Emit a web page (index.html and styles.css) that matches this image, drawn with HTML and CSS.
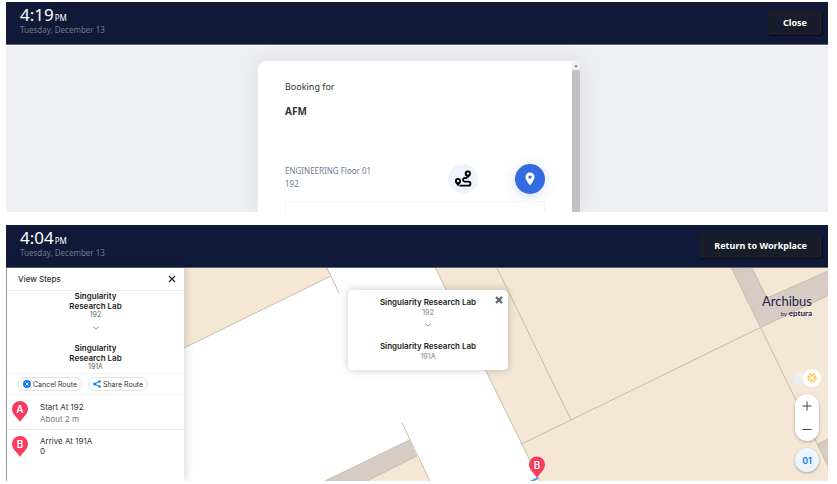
FILE: index.html
```html
<!DOCTYPE html>
<html lang="en">
<head>
<meta charset="utf-8">
<title>Workplace kiosk</title>
<link rel="stylesheet" href="styles.css">
</head>
<body>
<section class="screen">
  <header class="topbar">
    <div class="clock">
      <div class="time">4:19<span class="meridiem">PM</span></div>
      <div class="date">Tuesday, December 13</div>
    </div>
    <button class="action" type="button">Close</button>
  </header>
  <main class="stage">
    <div class="booking">
      <div class="booking-body">
        <p class="label">Booking for</p>
        <h1 class="title">AFM</h1>
        <div class="place">
          <div class="place-text">ENGINEERING Floor 01<br>192</div>
          <button class="round route" type="button" aria-label="Route">
            <svg width="18" height="18" viewBox="0 0 18 18" fill="none" stroke="#000">
              <circle cx="13.8" cy="3.5" r="2.1" stroke-width="2"/>
              <path d="M11 4.800 13.800 8.400 16.600 4.800Z" fill="#000" stroke="none"/>
              <circle cx="13.800" cy="3.500" r="1" fill="#fff" stroke="none"/>
              <circle cx="4" cy="11" r="2.1" stroke-width="2"/>
              <path d="M1.200 12.300 4 16.500 6.800 12.300Z" fill="#000" stroke="none"/>
              <circle cx="4" cy="11" r="1" fill="#fff" stroke="none"/>
              <path d="M13 8H10.500a1.900 1.900 0 0 0 0 3.700H14.500a1.900 1.900 0 0 1 0 3.900H5.500" stroke-width="1.800"/>
            </svg>
          </button>
          <button class="round locate" type="button" aria-label="Locate">
            <svg width="10" height="14" viewBox="0 0 10 14"><path fill="#fff" fill-rule="evenodd" d="M5 .5A4.5 4.5 0 0 0 .5 5C.5 8.3 5 13.3 5 13.3S9.500 8.300 9.500 5A4.500 4.500 0 0 0 5 .5Zm0 2.900a1.700 1.700 0 1 1 0 3.400 1.700 1.700 0 0 1 0-3.400Z"/></svg>
          </button>
        </div>
        <div class="field"></div>
      </div>
      <div class="scrollbar">
        <svg class="scroll-up" viewBox="0 0 8 9"><path d="M2 6 4 3.500 6 6Z" fill="#888"/></svg>
        <div class="scroll-thumb"></div>
      </div>
    </div>
  </main>
</section>

<section class="screen">
  <header class="topbar">
    <div class="clock">
      <div class="time">4:04<span class="meridiem">PM</span></div>
      <div class="date">Tuesday, December 13</div>
    </div>
    <button class="action" type="button">Return to Workplace</button>
  </header>
  <main class="map">
    <svg class="floor" viewBox="6 268 822 213" preserveAspectRatio="xMinYMin slice">
      <g fill="#f4e7d6">
        <path d="M6 268H327L331 276 184 348 6 435Z"/>
        <path d="M435.500 268H828V481H540Z"/>
        <path d="M367 481 417 456 429.500 481Z"/>
      </g>
      <g fill="#d6ccc4">
        <path d="M731.500 268H752L767 298 828 271V295.500L760.500 327.500Z"/>
        <path d="M325 481 409.500 440 417 456 367 481Z"/>
        <path d="M817 444.500 828 439V466Z"/>
      </g>
      <g fill="none" stroke="#cbbba6">
        <path d="M327 268 339.500 294M184 348 331 276"/>
        <path d="M435.500 268 540 481M497 268 571 420M521.700 444 760.500 327.500 828 295.500"/>
        <path d="M731.500 268 828 466M752 268 767 298 828 271M817 444.500 828 439"/>
        <path d="M402 423 430 481M325 481 409.500 440M367 481 417 456"/>
      </g>
      <path d="M538 478 530 482" stroke="#3aa5ee" stroke-width="2"/>
      <path d="M537 478C535 474 529 470 529 464.500a8 8 0 0 1 16 0C545 470 539 474 537 478Z" fill="#fb3a5d"/>
      <text class="pin-letter" x="537" y="469" text-anchor="middle">B</text>
    </svg>

    <aside class="steps">
      <div class="steps-head">
        <h2>View Steps</h2>
        <button class="bare" type="button" aria-label="Close steps">
          <svg width="8" height="8" viewBox="0 0 8 8"><path d="M1 1 7 7M7 1 1 7" stroke="#222" stroke-width="1.200"/></svg>
        </button>
      </div>
      <div class="endpoints narrow">
        <strong>Singularity<br>Research Lab</strong>
        <span>192</span>
        <svg width="8" height="6" viewBox="0 0 8 6"><path d="M1 1.500 4 4 7 1.500" fill="none" stroke="#999"/></svg>
        <strong>Singularity<br>Research Lab</strong>
        <span>191A</span>
      </div>
      <div class="chips">
        <button class="chip" type="button">
          <svg width="8" height="8" viewBox="0 0 8 8"><circle cx="4" cy="4" r="4" fill="#0c7ff2"/><path d="M2.500 2.500 5.500 5.500M5.500 2.500 2.500 5.500" stroke="#fff"/></svg>
          Cancel Route
        </button>
        <button class="chip" type="button">
          <svg width="8" height="8" viewBox="0 0 8 8"><path d="M6.500 1.500 1.700 4 6.500 6.500" fill="none" stroke="#0c7ff2"/><g fill="#0c7ff2"><circle cx="6.500" cy="1.500" r="1.300"/><circle cx="1.700" cy="4" r="1.600"/><circle cx="6.500" cy="6.500" r="1.300"/></g></svg>
          Share Route
        </button>
      </div>
      <div class="step">
        <svg width="16" height="21" viewBox="0 0 16 21"><path d="M8 21C6 17 0 13.500 0 8a8 8 0 0 1 16 0C16 13.500 10 17 8 21Z" fill="#fb3a5d"/><text class="pin-letter" x="8" y="12" text-anchor="middle">A</text></svg>
        <div><p>Start At 192</p><p class="muted">About 2 m</p></div>
      </div>
      <div class="step last">
        <svg width="16" height="21" viewBox="0 0 16 21"><path d="M8 21C6 17 0 13.500 0 8a8 8 0 0 1 16 0C16 13.500 10 17 8 21Z" fill="#fb3a5d"/><text class="pin-letter" x="8" y="12" text-anchor="middle">B</text></svg>
        <div><p>Arrive At 191A</p><p>0</p></div>
      </div>
    </aside>

    <div class="popup endpoints">
      <button class="bare popup-close" type="button" aria-label="Close route">
        <svg width="8" height="8" viewBox="0 0 8 8"><path d="M1 1 7 7M7 1 1 7" stroke="#666" stroke-width="2.200"/></svg>
      </button>
      <strong>Singularity Research Lab</strong>
      <span>192</span>
      <svg width="8" height="6" viewBox="0 0 8 6"><path d="M1 1.500 4 4 7 1.500" fill="none" stroke="#999"/></svg>
      <strong>Singularity Research Lab</strong>
      <span>191A</span>
    </div>

    <div class="logo">
      <div class="logo-name">Archibus</div>
      <div class="logo-by"><small>by</small> eptura</div>
    </div>

    <div class="controls">
      <button class="theme" type="button" aria-label="Light mode">
        <span class="track"></span>
        <span class="knob"><svg width="10" height="10" viewBox="0 0 10 10" fill="none" stroke="#f9c646"><circle cx="5" cy="5" r="2.500"/><circle cx="5" cy="5" r="4" stroke-width="1.600" stroke-dasharray="2.100 1.040"/></svg></span>
      </button>
      <div class="zoom">
        <button class="bare" type="button" aria-label="Zoom in"><svg width="10" height="10" viewBox="0 0 10 10"><path d="M5 .5V9.500M.5 5H9.500" stroke="#444"/></svg></button>
        <button class="bare" type="button" aria-label="Zoom out"><svg width="10" height="10" viewBox="0 0 10 10"><path d="M.5 5.500H9.500" stroke="#444"/></svg></button>
      </div>
      <button class="level" type="button">01</button>
    </div>
  </main>
</section>
</body>
</html>
```
FILE: styles.css
```css
* { box-sizing: border-box; }

body {
  margin: 0;
  padding: 2px 9px 3px 6px;
  height: 100vh;
  display: grid;
  grid-template-rows: 210fr 256fr;
  gap: 13px;
  background: #fff;
  font-family: "Noto Sans", sans-serif;
}

h1, h2, p { margin: 0; }
button { font: inherit; border: 0; padding: 0; cursor: pointer; }
svg { display: block; flex: none; }
.bare { background: none; }

.screen { display: flex; flex-direction: column; min-height: 0; overflow: hidden; }

/* Top bar */
.topbar {
  display: flex;
  justify-content: space-between;
  align-items: flex-start;
  flex: none;
  height: 43px;
  padding: 0 6px 0 14px;
  background: #101a38;
  border-bottom: 1px solid #5c6075;
}
.clock { padding-top: 2px; }
.time { color: #fff; font-size: 17px; line-height: 22px; }
.meridiem { font-size: 8px; line-height: 8px; margin-left: 1px; }
.date { color: #70758e; font-size: 8px; line-height: 8px; }
.action {
  margin-top: 8px;
  height: 25px;
  padding: 0 15px;
  border-radius: 3px;
  background: #191d2b;
  color: #fff;
  font-size: 9px;
  font-weight: 700;
  box-shadow: 1px 1px 1px #080b16;
}

/* Booking */
.stage {
  flex: 1;
  min-height: 0;
  display: flex;
  justify-content: center;
  padding: 15px 0 0 4px;
  border-top: 1px solid #fff;
  background: #eeeff3;
}
.booking {
  display: flex;
  width: 322px;
  background: #fff;
  border-radius: 8px 0 0 0;
  box-shadow: 0 0 20px rgba(40, 40, 70, .08);
}
.booking-body { flex: 1; display: flex; flex-direction: column; padding: 18px 27px 0; }
.label { color: #333; font-size: 9px; line-height: 16px; }
.title { margin-top: 8px; color: #333; font-size: 10px; line-height: 16px; }
.place { display: flex; align-items: flex-start; margin-top: 45px; }
.place-text { flex: 1; color: #6d7b90; font-size: 8px; line-height: 13px; }
.round { display: grid; place-items: center; width: 30px; height: 30px; border-radius: 50%; }
.route { background: #eff3fe; }
.locate { margin-left: 37px; background: #356be0; box-shadow: 0 2px 12px rgba(53, 107, 224, .25); }
.field { flex: 1; margin-top: 7px; border: 1px solid #f4f4f6; border-bottom: 0; }
.scrollbar { display: flex; flex-direction: column; width: 8px; background: #f1f1f1; }
.scroll-up { width: 8px; height: 9px; }
.scroll-thumb { flex: 1; background: #c1c1c1; }

/* Map */
.map {
  position: relative;
  flex: 1;
  min-height: 0;
  background: #fff;
  font-family: Inter, sans-serif;
  color: #333;
}
.floor { width: 100%; height: 100%; }
.pin-letter { fill: #fff; font-family: Inter, sans-serif; font-size: 10px; font-weight: 600; }

.steps {
  position: absolute;
  inset: 0 auto 0 0;
  width: 178px;
  border-left: 1px solid #999;
  background: #fff;
  box-shadow: 2px 0 8px rgba(0, 0, 0, .14);
  font-size: 8px;
}
.steps-head {
  display: flex;
  justify-content: space-between;
  align-items: center;
  height: 23px;
  padding: 0 8px 0 11px;
  border-bottom: 1px solid #eee;
}
.steps-head h2 { font-size: 8px; font-weight: 500; }

.endpoints {
  display: flex;
  flex-direction: column;
  align-items: center;
  text-align: center;
  font-size: 8px;
}
.endpoints strong { color: #222; font-weight: 600; line-height: 10px; }
.endpoints span { color: #666; font-size: 7px; line-height: 8px; }
.narrow { padding-bottom: 2px; }
.narrow svg { margin: 6px 0 12px; }
.chips {
  display: flex;
  gap: 6px;
  padding: 3px 11px;
  border: 1px solid #f1f1f1;
  border-width: 1px 0;
}
.chip {
  display: flex;
  align-items: center;
  gap: 2px;
  height: 14px;
  padding: 0 4px;
  border: 1px solid #dfe2e8;
  border-radius: 7px;
  background: #fff;
  color: #333;
  font-size: 7px;
}
.step {
  display: flex;
  gap: 12px;
  height: 35px;
  padding: 6px 5px;
  border-bottom: 1px solid #e5e5e5;
}
.step p { line-height: 12px; }
.step .muted { color: #777; }
.step.last { border: 0; }
.step.last p { line-height: 10px; }

.popup {
  position: absolute;
  top: 22px;
  left: 342px;
  width: 160px;
  padding: 7px 8px 8px;
  border-radius: 5px;
  background: #fff;
  box-shadow: 0 0 8px rgba(0, 0, 0, .22);
}
.popup strong { line-height: 11px; }
.popup span { color: #8b95a3; line-height: 10px; font-weight: 500; }
.popup svg { margin: 4px 0 13px; }
.popup .popup-close { position: absolute; top: 6px; right: 5px; }
.popup-close svg { margin: 0; }

.logo {
  position: absolute;
  top: 25px;
  right: 16px;
  color: #23264d;
  font-family: Lato, sans-serif;
  text-align: right;
}
.logo-name { font-size: 13px; line-height: 16px; }
.logo-by { font-size: 8px; font-weight: 700; line-height: 8px; }
.logo-by small { font-size: 6px; font-weight: 400; }

.controls {
  position: absolute;
  right: 7px;
  bottom: 9px;
  display: flex;
  flex-direction: column;
  align-items: center;
}
.theme { display: flex; align-items: center; width: 28px; background: none; }
.track { flex: none; width: 20px; height: 11px; border-radius: 6px; background: #eee; }
.knob { display: grid; place-items: center; flex: none; width: 18px; height: 18px; margin-left: -10px; border-radius: 50%; background: #fff; }
.zoom {
  display: flex;
  flex-direction: column;
  align-items: center;
  justify-content: space-around;
  width: 24px;
  height: 47px;
  margin: 7px 0;
  border-radius: 12px;
  background: #fff;
  box-shadow: 0 1px 3px rgba(0, 0, 0, .3);
}
.level {
  width: 24px;
  height: 24px;
  border-radius: 50%;
  background: #eaf6ff;
  color: #1277ee;
  font-size: 9px;
  font-weight: 600;
  box-shadow: 0 1px 3px rgba(0, 0, 0, .3);
}
```
